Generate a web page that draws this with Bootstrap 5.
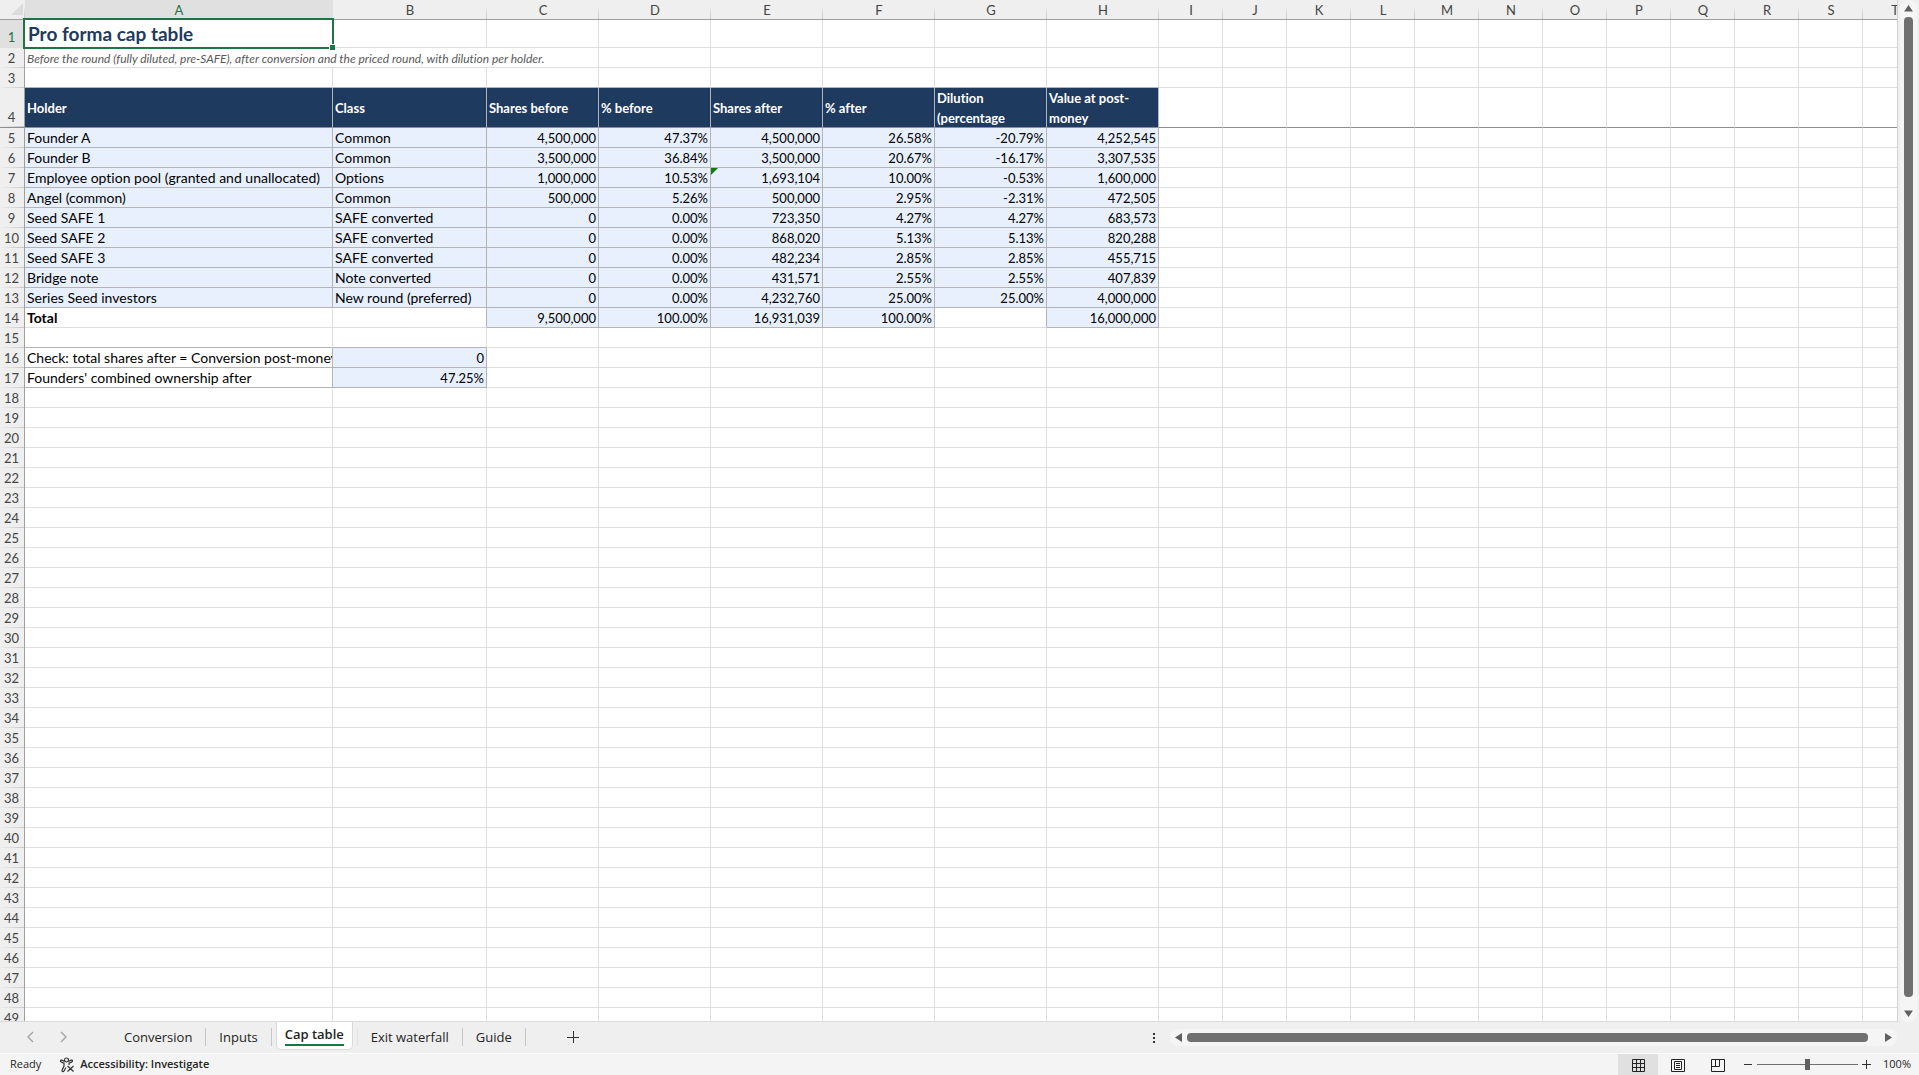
<!DOCTYPE html>
<html lang="en">
<head>
<meta charset="utf-8">
<meta name="viewport" content="width=device-width, initial-scale=1">
<title>Cap table</title>
<link href="https://cdn.jsdelivr.net/npm/bootstrap@5.3.0/dist/css/bootstrap.min.css" rel="stylesheet">
<style>
  body { background: #efefef; color: #242424; font-family: "Open Sans", "Noto Sans", sans-serif; font-size: 11px; }
  button { font: inherit; color: inherit; background: none; border: 0; padding: 0; }

  /* Sheet grid */
  .grid-pane { background: #fff; border-right: 1px solid #d4d4d4; border-bottom: 1px solid #dadada; }
  .sheet { table-layout: fixed; width: 1926px; border-collapse: separate; border-spacing: 0; font-family: Lato, sans-serif; font-variant-ligatures: none; font-size: 14px; line-height: 19px; color: #000; }
  .sheet th, .sheet td { padding: 0 2px; height: 20px; border: 0 solid #dfdfdf; border-width: 0 1px 1px 0; white-space: nowrap; overflow: hidden; vertical-align: bottom; }
  .sheet thead th { background: linear-gradient(#efefef 30%, #c6c6c6) right / 1px 100% no-repeat #efefef; border-right-width: 0; border-bottom-color: #9f9f9f; color: #444; font-weight: 400; text-align: center; font-size: 13px; line-height: 17px; }
  .sheet tbody th { background: linear-gradient(90deg, #efefef, #c6c6c6) bottom / 100% 1px no-repeat #efefef; border-width: 0 1px 0 0; border-color: #9f9f9f; color: #444; font-weight: 400; text-align: center; padding: 0 1px 0 0; font-size: 13px; line-height: 19px; }
  .sheet thead .picked, .sheet tbody .picked { background: #e0e0e0; color: #217346; }
  .sheet .tall > * { height: 28px; }
  .sheet .tall th { line-height: 21px; }
  .sheet .heads > * { height: 40px; border-bottom-color: #8f8f8f; }
  .sheet .heads th { border-bottom-width: 1px; }
  .sheet .title { font-size: 19px; font-weight: 700; line-height: 26px; color: #1f3a5f; padding-left: 3px; }
  .sheet .note { font-size: 12px; line-height: 17px; font-style: italic; color: #595959; }
  .sheet .head { background: #1f3a5f; color: #fff; font-weight: 700; font-size: 13px; border-right-color: #b4b4b4; vertical-align: middle; }
  .sheet .head div { white-space: normal; line-height: 20px; max-height: 39px; }
  .sheet .fill { background: #e8f0fd; border-color: #b4b4b4; }
  .sheet .num { text-align: right; font-size: 13px; line-height: 17px; }
  .sheet .edge-b { border-bottom-color: #b4b4b4; }
  .sheet .edge-r { border-right-color: #b4b4b4; }
  .flag { position: relative; }
  .flag::before { content: ""; position: absolute; left: 0; top: 0; width: 7px; height: 7px; background: #107c10; clip-path: polygon(0 0, 100% 0, 0 100%); }
  .cursor { position: absolute; left: 23px; top: 18px; width: 311px; height: 31px; border: 2px solid #217346; pointer-events: none; }
  .cursor::after { content: ""; position: absolute; right: -3px; bottom: -3px; width: 6px; height: 6px; background: #217346; border: solid #fff; border-width: 1px 0 0 1px; }

  /* Scroll bars */
  .scroll-y { width: 17px; margin: 0 2px; padding: 5px 0; background: #f5f5f5; border-radius: 8px; }
  .scroll-x { width: 727px; height: 17px; padding: 0 5px; background: #f5f5f5; border-radius: 8px; }
  .bar-y { width: 9px; border-radius: 4px; background: #707070; margin: 5px 0 13px; }
  .bar-x { height: 9px; border-radius: 4px; background: #707070; margin: 0 17px 0 5px; }
  .x-group { gap: 14px; margin-right: 22px; }

  /* Sheet tabs */
  .tab-strip { height: 31px; font-size: 13px; }
  .tab-strip a { color: #242424; text-decoration: none; }
  .tab-strip button { display: flex; align-items: center; height: 30px; }
  .tab-next { margin: 0 41px 0 20px; }
  .tab-new { margin-left: 41px; }
  .tab-item { height: 18px; line-height: 18px; padding: 0 13px; border-right: 1px solid #c6c6c6; margin-top: 6px; }
  .tab-active { height: 28px; width: 77px; background: #fff; border: 1px solid #dadada; border-top: 0; border-radius: 0 0 5px 5px; font-weight: 600; margin: 0 4px; padding-top: 3px; }
  .tab-active span { border-bottom: 2px solid #107c41; line-height: 19px; height: 21px; }

  /* Status bar */
  .status { height: 22px; background: #f4f4f4; border-top: 1px solid #fff; padding: 0 8px 0 10px; }
  .access { margin-left: 18px; gap: 4px; }
  .view { width: 40px; height: 21px; }
  .view.on { background: #e0e0e0; }
  .zoom { appearance: none; width: 101px; height: 11px; margin: 0 4px 0 5px; background: linear-gradient(#707070, #707070) center / 100% 1px no-repeat; }
  .zoom::-webkit-slider-thumb { appearance: none; width: 5px; height: 11px; background: #606060; }
  .zoom-out { margin-left: 5px; }
  .zoom-in { margin-right: 12px; }
</style>
</head>
<body>
<div class="d-flex flex-column vh-100 overflow-hidden">
  <main class="d-flex flex-fill overflow-hidden">
    <div class="grid-pane flex-fill overflow-hidden position-relative">
      <table class="sheet">
        <colgroup id="cols"></colgroup>
        <thead><tr id="letters"></tr></thead>
        <tbody id="rows"></tbody>
      </table>
      <div class="cursor"></div>
    </div>
    <div class="scroll-y d-flex flex-column align-items-center flex-shrink-0">
      <svg width="9" height="7"><path d="M4.5 0L9 6.5H0z" fill="#606060"/></svg>
      <div class="bar-y flex-fill"></div>
      <svg width="9" height="7"><path d="M4.5 7L9 .5H0z" fill="#606060"/></svg>
    </div>
  </main>

  <nav class="tab-strip d-flex flex-shrink-0" aria-label="Sheets">
    <button class="ms-4" aria-label="Previous sheet"><svg width="13" height="14" fill="none" stroke="#a0a0a0" stroke-width="1.3"><path d="M9 2L4 7l5 5"/></svg></button>
    <button class="tab-next" aria-label="Next sheet"><svg width="13" height="14" fill="none" stroke="#a0a0a0" stroke-width="1.3"><path d="M4 2l5 5-5 5"/></svg></button>
    <a href="#" class="tab-item">Conversion</a>
    <a href="#" class="tab-item">Inputs</a>
    <a href="#" class="tab-active d-flex justify-content-center" aria-current="page"><span>Cap table</span></a>
    <a href="#" class="tab-item border-start">Exit waterfall</a>
    <a href="#" class="tab-item">Guide</a>
    <button class="tab-new" aria-label="New sheet"><svg width="12" height="12" stroke="#333"><path d="M0 6.500h12M6.500 0v12"/></svg></button>
    <div class="x-group d-flex align-items-center ms-auto">
      <svg width="3" height="10" fill="#333"><path d="M0 0h2v2H0zM0 4h2v2H0zM0 8h2v2H0z"/></svg>
      <div class="scroll-x d-flex align-items-center">
        <svg width="7" height="9"><path d="M0 4.500L7 0v9z" fill="#606060"/></svg>
        <div class="bar-x flex-fill"></div>
        <svg width="7" height="9"><path d="M7 4.500L0 0v9z" fill="#606060"/></svg>
      </div>
    </div>
  </nav>

  <footer class="status d-flex align-items-center flex-shrink-0">
    <span>Ready</span>
    <button class="access d-flex align-items-center fw-semibold">
      <svg width="17" height="16" fill="none" stroke="#333" stroke-width="1.200"><circle cx="7.500" cy="3" r="2"/><path d="M5.500 4.500C3.500 3.500 2 2.500 1.500 3.500S3 5.500 5 6v3L3 13.500c0 1.500 1.500 1.500 2 .5l2-3.500M9.500 4.500C11.500 3.500 13 2.500 13.500 3.500S12 5.500 10 6v2M8.500 9l6 5.500M14.500 9l-6 5.500"/></svg>
      Accessibility: Investigate
    </button>
    <div class="d-flex align-items-center ms-auto">
      <button class="view on" aria-label="Normal"><svg width="13" height="13" fill="none" stroke="#222"><path d="M.5.5h12v12H.5zM4.500.5v12M8.500.5v12M.5 4.500h12M.5 8.500h12"/></svg></button>
      <button class="view" aria-label="Page layout"><svg width="14" height="13" fill="none" stroke="#222"><path d="M.5.5h13v12H.5zM3.500 2.500h7v8h-7zM5 4.500h4M5 6.500h4M5 8.500h4"/></svg></button>
      <button class="view" aria-label="Page break preview"><svg width="14" height="13" fill="none" stroke="#222"><path d="M.5.5h13v12H.5zM4.500.5v7M8.500.5v7M.5 7.500h8"/></svg></button>
      <button class="zoom-out d-flex" aria-label="Zoom out"><svg width="9" height="9" stroke="#333"><path d="M1 4.500h8"/></svg></button>
      <input class="zoom" type="range" min="0" max="200" value="100" aria-label="Zoom">
      <button class="zoom-in d-flex" aria-label="Zoom in"><svg width="9" height="9" stroke="#333"><path d="M0 4.500h9M4.500 0v9"/></svg></button>
      <span>100%</span>
    </div>
  </footer>
</div>
<script src="https://cdn.jsdelivr.net/npm/bootstrap@5.3.0/dist/js/bootstrap.bundle.min.js"></script>
<script>
  const letters = [...'ABCDEFGHIJKLMNOPQRST'];
  const widths = [308, 154, 112, 112, 112, 112, 112, 112];
  const holders = [
    ['Founder A', 'Common', '4,500,000', '47.37%', '4,500,000', '26.58%', '-20.79%', '4,252,545'],
    ['Founder B', 'Common', '3,500,000', '36.84%', '3,500,000', '20.67%', '-16.17%', '3,307,535'],
    ['Employee option pool (granted and unallocated)', 'Options', '1,000,000', '10.53%', '1,693,104', '10.00%', '-0.53%', '1,600,000'],
    ['Angel (common)', 'Common', '500,000', '5.26%', '500,000', '2.95%', '-2.31%', '472,505'],
    ['Seed SAFE 1', 'SAFE converted', '0', '0.00%', '723,350', '4.27%', '4.27%', '683,573'],
    ['Seed SAFE 2', 'SAFE converted', '0', '0.00%', '868,020', '5.13%', '5.13%', '820,288'],
    ['Seed SAFE 3', 'SAFE converted', '0', '0.00%', '482,234', '2.85%', '2.85%', '455,715'],
    ['Bridge note', 'Note converted', '0', '0.00%', '431,571', '2.55%', '2.55%', '407,839'],
    ['Series Seed investors', 'New round (preferred)', '0', '0.00%', '4,232,760', '25.00%', '25.00%', '4,000,000']
  ];
  const cell = (text = '', cls = '', span = 1) => ({ text, cls, span });
  const rows = {
    1: [cell('Pro forma cap table', 'title')],
    2: [cell('Before the round (fully diluted, pre-SAFE), after conversion and the priced round, with dilution per holder.', 'note', 3)],
    3: Array.from({ length: 8 }, () => cell('', 'edge-b')),
    4: ['Holder', 'Class', 'Shares before', '% before', 'Shares after', '% after', 'Dilution (percentage', 'Value at post-money'].map(t => cell(`<div>${t}</div>`, 'head')),
    14: [cell('Total', 'fw-bold'), cell('', 'edge-r'), cell('9,500,000', 'fill num'), cell('100.00%', 'fill num'), cell('16,931,039', 'fill num'), cell('100.00%', 'fill num'), cell('', 'edge-r'), cell('16,000,000', 'fill num')],
    15: [cell('', 'edge-b'), cell('', 'edge-b')],
    16: [cell('Check: total shares after = Conversion post-money', 'edge-b edge-r'), cell('0', 'fill num')],
    17: [cell("Founders' combined ownership after", 'edge-b edge-r'), cell('47.25%', 'fill num')]
  };
  holders.forEach((h, i) => rows[5 + i] = h.map((t, c) => cell(t, 'fill' + (c > 1 ? ' num' : '') + (i === 2 && c === 4 ? ' flag' : ''))));

  document.getElementById('cols').innerHTML = '<col style="width:25px">' + letters.map((l, i) => `<col style="width:${widths[i] || 64}px">`).join('');
  document.getElementById('letters').innerHTML = '<th><svg width="12" height="12" class="d-block ms-auto mb-1"><path d="M12 0v12H0z" fill="#dcdcdc"/></svg></th>' + letters.map((l, i) => `<th scope="col"${i ? '' : ' class="picked"'}>${l}</th>`).join('');
  let html = '';
  for (let r = 1; r <= 49; r++) {
    const cells = [...(rows[r] || [])];
    let used = cells.reduce((n, c) => n + c.span, 0);
    while (used++ < letters.length) cells.push(cell());
    html += `<tr class="${r === 1 ? 'tall' : r === 4 ? 'heads' : ''}"><th scope="row"${r === 1 ? ' class="picked"' : ''}>${r}</th>` +
      cells.map(c => `<td class="${c.cls}" colspan="${c.span}">${c.text}</td>`).join('') + '</tr>';
  }
  document.getElementById('rows').innerHTML = html;
</script>
</body>
</html>
